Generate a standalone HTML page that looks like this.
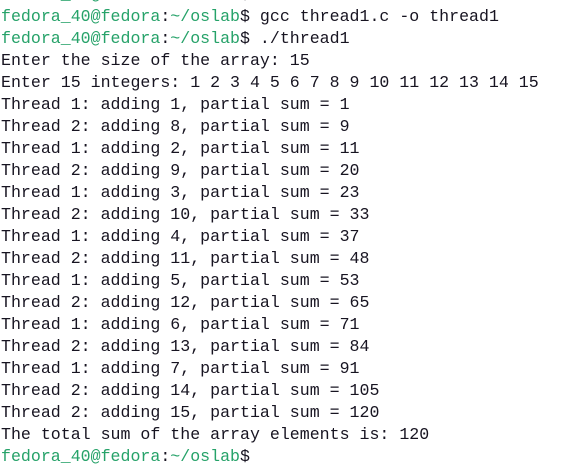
<!DOCTYPE html>
<html><head><style>
html,body{margin:0;padding:0;background:#fff;width:576px;height:450px;overflow:hidden}
pre{margin:0;position:absolute;left:1px;top:-16px;font-family:"Liberation Mono",monospace;font-size:16.6px;line-height:22px;color:#171421;white-space:pre}
.g{color:#26a269}
</style></head><body>
<pre><span class="g">fedora_40@fedora</span>:<span class="g">~/oslab</span>$ 
<span class="g">fedora_40@fedora</span>:<span class="g">~/oslab</span>$ gcc thread1.c -o thread1
<span class="g">fedora_40@fedora</span>:<span class="g">~/oslab</span>$ ./thread1
Enter the size of the array: 15
Enter 15 integers: 1 2 3 4 5 6 7 8 9 10 11 12 13 14 15
Thread 1: adding 1, partial sum = 1
Thread 2: adding 8, partial sum = 9
Thread 1: adding 2, partial sum = 11
Thread 2: adding 9, partial sum = 20
Thread 1: adding 3, partial sum = 23
Thread 2: adding 10, partial sum = 33
Thread 1: adding 4, partial sum = 37
Thread 2: adding 11, partial sum = 48
Thread 1: adding 5, partial sum = 53
Thread 2: adding 12, partial sum = 65
Thread 1: adding 6, partial sum = 71
Thread 2: adding 13, partial sum = 84
Thread 1: adding 7, partial sum = 91
Thread 2: adding 14, partial sum = 105
Thread 2: adding 15, partial sum = 120
The total sum of the array elements is: 120
<span class="g">fedora_40@fedora</span>:<span class="g">~/oslab</span>$ </pre>
</body></html>
